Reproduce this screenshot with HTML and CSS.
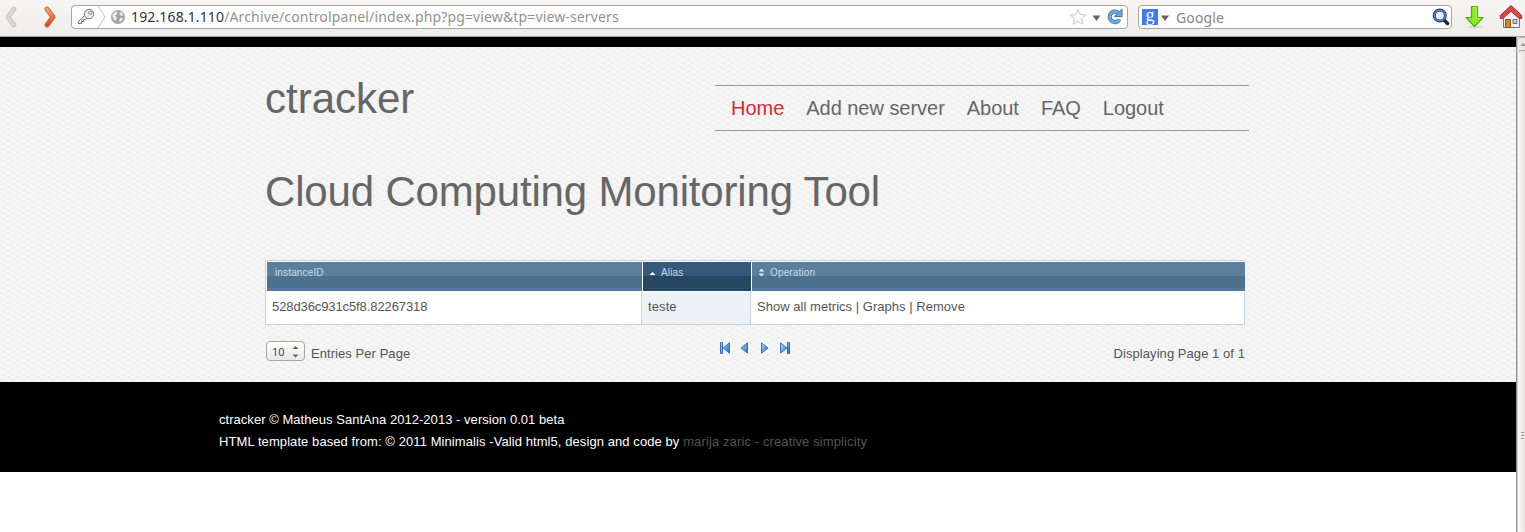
FILE: index.html
```html
<!DOCTYPE html>
<html lang="en">
<head>
<meta charset="utf-8">
<title>ctracker</title>
<link rel="stylesheet" href="styles.css">
</head>
<body>
<svg class="defs" width="0" height="0">
  <defs>
    <linearGradient id="orange" x1="0" y1="0" x2="0" y2="1"><stop offset="0" stop-color="#f5a468"/><stop offset="1" stop-color="#df4a1c"/></linearGradient>
    <linearGradient id="blue" x1="0" y1="0" x2="1" y2="1"><stop offset="0" stop-color="#b9d8f6"/><stop offset="1" stop-color="#1f66d0"/></linearGradient>
  </defs>
</svg>
<header class="toolbar">
  <svg class="back" width="14" height="22" viewBox="0 0 14 22"><path d="M11 3 5 11l6 8" fill="none" stroke="#c3c1bd" stroke-width="4.600" stroke-linecap="round" stroke-linejoin="round"/><path d="M11 3 5 11l6 8" fill="none" stroke="#d9d7d3" stroke-width="3.200" stroke-linecap="round" stroke-linejoin="round"/></svg>
  <svg class="forward" width="14" height="22" viewBox="0 0 14 22"><path d="M3 3 9 11l-6 8" fill="none" stroke="#c1592b" stroke-width="4.800" stroke-linecap="round" stroke-linejoin="round"/><path d="M3 3 9 11l-6 8" fill="none" stroke="url(#orange)" stroke-width="3.200" stroke-linecap="round" stroke-linejoin="round"/></svg>
  <div class="field address">
    <svg class="site" width="54" height="22" viewBox="0 0 54 22">
      <path d="M26 0l7 11-7 11" fill="none" stroke="#c4c4c4"/>
      <path d="M12.500 9.500 6.500 15.500v2h3v-2h2v-2h2l1.700-1.700" fill="#eee" stroke="#777"/>
      <circle cx="17" cy="8" r="4.700" fill="#eee" stroke="#777"/><circle cx="18.300" cy="6.700" r="1.600" fill="#fff" stroke="#777"/>
      <circle cx="46" cy="11" r="7" fill="#a3a3a3"/>
      <path d="M40.500 8l3-2.500 2 .5-.5 2.500-2 1 2 2-1 3-2-.5-1.500-3zM48 5.500l3 2-.5 2.500-3-1zM48 12l3 0-1.500 3-2.500 1z" fill="#e9e9e9"/>
    </svg>
    <span class="url"><b>192.168.1.110</b><span>/Archive/controlpanel/index.php?pg=view&amp;tp=view-servers</span></span>
    <svg class="actions" width="56" height="22" viewBox="0 0 56 22">
      <path d="M8 3.500l2.200 5.100 5.500.5-4.200 3.600 1.300 5.500L8 15.300l-4.800 2.900 1.300-5.500L.3 9.100l5.500-.5z" fill="#fff" stroke="#c5c5c5"/>
      <path d="M22.500 9.500h8l-4 5.500z" fill="#666"/>
      <path d="M49.500 13.500a5.300 5.300 0 1 1-1.500-7" fill="none" stroke="#3f78ae" stroke-width="4.200"/>
      <path d="M44.500 10.500h7.500v-7.500z" fill="#6aa5d6" stroke="#3f78ae"/>
      <path d="M49.500 13.500a5.300 5.300 0 1 1-1.500-7" fill="none" stroke="#6fa9da" stroke-width="2.600"/>
    </svg>
  </div>
  <div class="field search">
    <span class="engine">g</span>
    <svg class="drop" width="8" height="6" viewBox="0 0 8 6"><path d="M0 .5h8L4 6z" fill="#666"/></svg>
    <span class="placeholder">Google</span>
    <svg class="lens" width="18" height="18" viewBox="0 0 18 18"><path d="M12 12l3.500 3.500" stroke="#222" stroke-width="3.500" stroke-linecap="round"/><circle cx="7.800" cy="7.500" r="5.500" fill="#e8eefa" stroke="#26367f" stroke-width="3"/><circle cx="7.800" cy="7.500" r="5.400" fill="none" stroke="#5a80d2" stroke-width="1.300"/></svg>
  </div>
  <svg class="download" width="20" height="24" viewBox="0 0 20 24"><ellipse cx="10" cy="22" rx="8" ry="1.500" fill="#dcdad6"/><path d="M6.500 1.500h6v11h5.500l-8.500 9-8.500-9h5.500z" fill="#8aea1c" stroke="#52ab15" stroke-width="1.200" stroke-linejoin="round"/><path d="M7.600 2.700h3.800v11h4" fill="none" stroke="#b5f56c"/></svg>
  <svg class="home" width="24" height="25" viewBox="0 0 24 25"><path d="M4.500 11.500 12 5l8.500 6.500v12h-16z" fill="#f0f0ee" stroke="#777"/><path d="M12 1.500 1.300 11.500v3h2.500L12 7.300l8.200 7.200h2.500v-3z" fill="#d4484a" stroke="#a82e30"/><path d="M6.500 15.500h5v8h-5z" fill="#cf861d" stroke="#8e590b"/><path d="M14 15.500h4v4h-4z" fill="#b7cbe0" stroke="#687683"/></svg>
</header>
<div class="viewport">
  <div class="page">
    <div class="main">
      <div class="container">
        <div class="masthead">
          <h1>ctracker</h1>
          <nav><a class="active">Home</a><a>Add new server</a><a>About</a><a>FAQ</a><a>Logout</a></nav>
        </div>
        <h2>Cloud Computing Monitoring Tool</h2>
        <div class="table">
          <div class="row head">
            <div class="id">instanceID</div>
            <div class="alias"><svg width="7" height="9" viewBox="0 0 7 9"><path d="M.5 6h6L3.500 3z" fill="#fff"/></svg>Alias</div>
            <div class="op"><svg width="7" height="9" viewBox="0 0 7 9"><path d="M.5 3.500h6L3.500.5zM.5 5.500h6L3.500 8.500z" fill="#dfe8ef"/></svg>Operation</div>
          </div>
          <div class="row body">
            <div class="id">528d36c931c5f8.82267318</div>
            <div class="alias">teste</div>
            <div class="op">Show all metrics | Graphs | Remove</div>
          </div>
        </div>
        <div class="controls">
          <div class="perpage"><span class="select">10<svg width="7" height="14" viewBox="0 0 7 14"><path d="M.5 5h6L3.500 2zM.5 10.500h6L3.500 13.500z" fill="#666"/></svg></span><span>Entries Per Page</span></div>
          <div class="pager">
            <svg width="10" height="12" viewBox="0 0 10 12"><path d="M.5.5h2v11h-2zM9.500.8v10.400L3.200 6z" fill="url(#blue)" stroke="#2a66b9" stroke-width=".9"/></svg>
            <svg width="10" height="12" viewBox="0 0 10 12"><path d="M7.500.8v10.400L1 6z" fill="url(#blue)" stroke="#2a66b9" stroke-width=".9"/></svg>
            <svg width="10" height="12" viewBox="0 0 10 12"><path d="M1.500.8v10.400L8 6z" fill="url(#blue)" stroke="#2a66b9" stroke-width=".9"/></svg>
            <svg width="11" height="12" viewBox="0 0 11 12"><path d="M7.500.5h2v11h-2zM.5.8v10.400L7 6z" fill="url(#blue)" stroke="#2a66b9" stroke-width=".9"/></svg>
          </div>
          <div class="count">Displaying Page 1 of 1</div>
        </div>
      </div>
    </div>
    <footer>
      <p>ctracker © Matheus SantAna 2012-2013 - version 0.01 beta</p>
      <p class="credit">HTML template based from: © 2011 Minimalis -Valid html5, design and code by <a>marija zaric - creative simplicity</a></p>
    </footer>
  </div>
  <div class="scrollbar">
    <svg width="8" height="13" viewBox="0 0 8 13"><path d="M0 13V5Q0 .5 5 .5h3" fill="none" stroke="#b5b2ad"/><path d="M3 9h6L6 6z" fill="#999"/></svg>
    <div class="thumb"><i></i><i></i><i></i></div>
  </div>
</div>
</body>
</html>
```
FILE: styles.css
```css
* { box-sizing: border-box; }
body { margin: 0; height: 532px; overflow: hidden; background: #fff; font: 13px "Liberation Sans", Arial, sans-serif; color: #555; }
svg { display: block; flex: none; }
.defs { position: absolute; }

.toolbar { display: flex; align-items: flex-start; width: 1525px; height: 37px; overflow: hidden; background: linear-gradient(#f6f5f4, #efedeb); border-bottom: 1px solid #a9a39b; font-family: "Noto Sans", sans-serif; }
.back { margin: 6px 0 0 3px; }
.forward { margin: 6px 0 0 27px; }
.field { display: flex; align-items: center; height: 24px; margin-top: 5px; border: 1px solid #a9a5a0; border-radius: 4px; background: #fff; }
.address { width: 1057px; margin-left: 13px; }
.url { flex: 1; margin-left: 5px; font-size: 14px; line-height: 20px; letter-spacing: .14px; color: #929292; white-space: nowrap; }
.url b { font-weight: 400; color: #333; }
.actions { margin-right: 1px; }
.search { width: 314px; margin-left: 10px; padding: 0 1px 0 3px; }
.engine { width: 16px; height: 16px; background: #4079f5; color: #fff; font: 18px/12px "Liberation Serif", serif; text-align: center; }
.drop { margin: 2px 0 0 3px; }
.placeholder { flex: 1; margin-left: 7px; font-size: 14px; letter-spacing: .15px; color: #858585; }
.download { margin: 5px 0 0 13px; }
.home { margin: 4px 0 0 14px; }

.viewport { display: flex; height: 495px; }
.page { width: 1516px; }
.main { height: 345px; border-top: 10px solid #000; background-color: #f3f3f3; background-image: repeating-linear-gradient(30deg, rgba(255,255,255,.6) 0 1px, transparent 1px 5px), repeating-linear-gradient(150deg, rgba(220,220,220,.28) 0 1px, transparent 1px 5px); }
.container { width: 984px; margin-left: 265px; padding-top: 28px; }
.masthead { display: flex; justify-content: space-between; height: 92px; }
h1, h2 { margin: 0; font-size: 42px; line-height: 48px; font-weight: 400; color: #666; }
nav { display: flex; gap: 22px; width: 534px; height: 46px; margin-top: 10px; padding-left: 16px; border: solid #999; border-width: 1px 0; font-size: 20px; line-height: 44px; letter-spacing: -.03px; color: #666; white-space: nowrap; }
.active { color: #d32a32; }
h2 { margin-top: 1px; letter-spacing: -.17px; }

.table { width: 980px; height: 65px; margin-top: 44px; padding: 1px 0 0 1px; background: #fff; border: 1px solid #c3d3e1; border-width: 1px 0 1px 1px; }
.row { display: flex; }
.head { height: 29px; gap: 1px; color: #c9dae7; font-size: 10px; line-height: 22px; letter-spacing: .15px; }
.head div { display: flex; gap: 5px; padding-left: 6px; background: linear-gradient(#5c7f9b 0 14px, #4b718e 14px 26px, #54799a 26px); }
.head svg { margin-top: 7px; }
.head .id { width: 375px; padding-left: 8px; }
.head .alias { width: 108px; background: linear-gradient(#35597a 0 14px, #264763 14px); }
.head .op { flex: 1; }
.head .op svg { margin-top: 6px; }
.body { height: 32px; margin-top: 1px; line-height: 30px; border-right: 1px solid #c3d3e1; }
.body .id { width: 374px; padding-left: 5px; letter-spacing: -.1px; }
.body .alias { width: 110px; padding-left: 6px; background: #ecf1f6; border: solid #c3d3e1; border-width: 0 1px; letter-spacing: .1px; }
.body .op { padding-left: 6px; letter-spacing: .03px; }

.controls { display: flex; justify-content: space-between; width: 980px; height: 22px; margin-top: 15px; line-height: 28px; letter-spacing: .06px; }
.perpage { display: flex; width: 455px; gap: 6px; }
.select { display: flex; justify-content: space-between; align-items: center; width: 39px; height: 20px; margin: 1px 0 0 1px; padding: 0 5px; border: 1px solid #aaa7a3; border-radius: 4px; background: linear-gradient(#fff, #e9e8e6); font: 11px "Noto Sans", sans-serif; color: #444; }
.pager { display: flex; gap: 10px; margin-top: 2px; }
.count { width: 455px; text-align: right; }

footer { height: 90px; padding: 27px 0 0 219px; background: #000; color: #fff; line-height: 22px; letter-spacing: .035px; }
footer p { margin: 0; }
footer .credit { letter-spacing: .08px; }
footer a { color: #555; letter-spacing: .12px; }

.scrollbar { width: 9px; border-left: 1px solid #999590; background: #eceae8; }
.thumb { display: flex; flex-direction: column; align-items: flex-end; gap: 2px; height: 490px; padding: 381px 1px 0 0; border-top: 1px solid #aaa6a1; border-left: 1px solid #c9c7c4; border-radius: 5px 0 0 0; background: linear-gradient(90deg, #fafafa, #e4e3e2); }
.thumb i { width: 3px; height: 1px; background: #999; }
```
